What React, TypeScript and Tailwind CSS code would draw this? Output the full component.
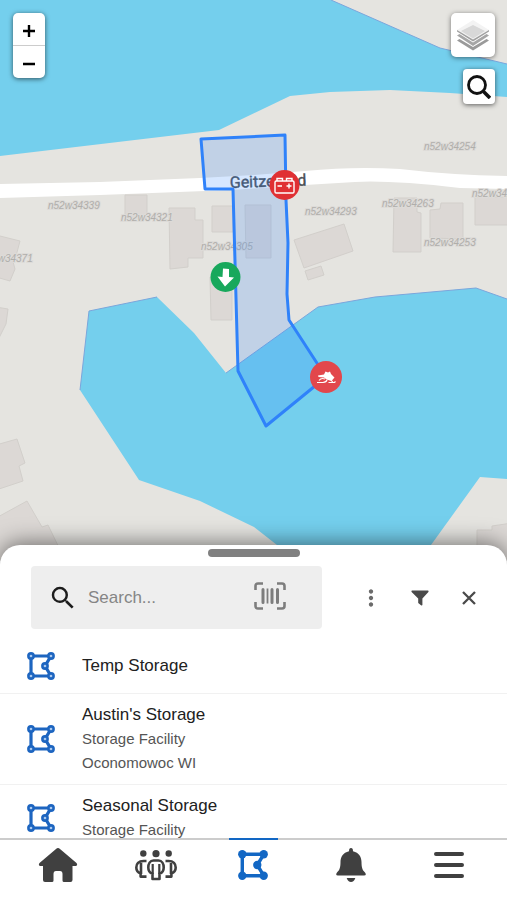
import { useState } from "react";
import { MdMoreVert, MdSearch } from "react-icons/md";

const WATER = "#74cfed";
const SHORE = "#7ba6dc";

const facilities = [
  { name: "Temp Storage", details: [] },
  { name: "Austin's Storage", details: ["Storage Facility", "Oconomowoc WI"] },
  { name: "Seasonal Storage", details: ["Storage Facility"] },
];

const houseLabels = [
  { text: "n52w34254", x: 424, y: 150 },
  { text: "n52w34339", x: 48, y: 209 },
  { text: "n52w34321", x: 121, y: 221 },
  { text: "n52w34305", x: 201, y: 250 },
  { text: "n52w34371", x: -19, y: 262 },
  { text: "n52w34293", x: 305, y: 215 },
  { text: "n52w34263", x: 382, y: 207 },
  { text: "n52w34253", x: 424, y: 246 },
  { text: "n52w34243", x: 472, y: 197 },
];

const buildings = [
  "-4,235 20,241 16,256 12,258 15,269 10,281 -4,277",
  "-4,307 8,309 6,324 -4,344",
  "125,195 147,195 147,218 125,218",
  "169,208 195,208 195,220 203,220 203,258 188,258 188,267 170,269",
  "212,206 233,206 233,232 212,232",
  "210,277 232,277 232,320 211,320",
  "245,205 271,205 271,258 246,258",
  "294,240 344,224 353,251 304,268",
  "305,271 321,266 324,275 308,280",
  "394,198 417,198 417,212 421,213 421,252 393,252",
  "430,210 440,209 441,203 463,203 463,239 430,238",
  "475,197 512,197 512,225 475,225",
  "-4,445 17,439 25,463 19,466 23,481 -4,490",
  "-4,518 27,501 42,527 48,525 66,562 -4,562",
  "477,530 492,530 492,526 512,523 512,562 477,562",
];

function PolygonIcon({ className, solid }: { className?: string; solid?: boolean }) {
  const points = [[4, 4], [24, 4], [18, 14], [24, 24], [4, 24]];
  return (
    <svg viewBox="0 0 28 28" className={className} aria-hidden="true">
      <path d="M4 4H24L18 14L24 24H4Z" fill="none" stroke="currentColor" strokeWidth="3.200" />
      {points.map(([x, y]) => (
        <g key={`${x}-${y}`}>
          <circle cx={x} cy={y} r="3.900" fill="currentColor" />
          {!solid && <circle cx={x} cy={y} r="1.300" fill="#a9c8ee" />}
        </g>
      ))}
    </svg>
  );
}

function BarcodeIcon() {
  return (
    <svg viewBox="0 0 32 28" className="h-7 w-8" fill="none" stroke="currentColor" aria-hidden="true">
      <path
        d="M9 1.500H4Q1.500 1.500 1.500 4V8M23 1.500h5q2.500 0 2.500 2.500V8M9 26.500H4Q1.500 26.500 1.500 24V20M23 26.500h5q2.500 0 2.500-2.500V20"
        strokeWidth="2.600"
      />
      <path d="M9 7.500V20.500M18 7.500V20.500M23.500 7.500V20.500" strokeWidth="3" strokeLinecap="round" />
      <path d="M13.500 6.500V21.500" strokeWidth="1.800" />
    </svg>
  );
}

function FilterIcon() {
  return (
    <svg viewBox="0 0 18 16" className="h-4 w-[18px]" fill="currentColor" aria-hidden="true">
      <path d="M1 .5H17Q18 .8 17.400 1.900L11.400 8.400V15Q11 15.800 10 15.200L7.200 13V8.400L.6 1.900Q0 .8 1 .5Z" />
    </svg>
  );
}

function CloseIcon() {
  return (
    <svg viewBox="0 0 14 14" className="size-3.5" stroke="currentColor" strokeWidth="2.300" aria-hidden="true">
      <path d="M1 1 13 13M13 1 1 13" />
    </svg>
  );
}

function LayersIcon() {
  return (
    <svg viewBox="0 0 32 32" className="size-8" aria-hidden="true">
      <path d="M0 21.500 2.500 20 16 28 29.500 20 32 21.500 16 31.500Z" fill="#9a9a9a" />
      <path d="M0 16.500 2.500 15 16 23.500 29.500 15 32 16.500 16 27Z" fill="#a6a6a6" />
      <path d="M0 11 16 1 32 11 16 21Z" fill="#f3f3f3" />
      <path d="M4 12 16 6 28 12 16 19.500Z" fill="#d8d8d8" />
      <path d="M0 11 16 20.500 32 11V12.500L16 22.500 0 12.500Z" fill="#a0a0a0" />
    </svg>
  );
}

function HomeIcon() {
  return (
    <svg viewBox="0 0 40 34" className="h-[34px] w-10" fill="currentColor" aria-hidden="true">
      <path d="M20 0Q21 0 22 1L38.500 15Q40 17 38 18H34.500V32Q34.500 34 32.500 34H26Q24.500 34 24.500 32.500V26Q24.500 23 22 23H18Q15.500 23 15.500 26V32.500Q15.500 34 14 34H7Q5 34 5 32V18H2Q0 17 1.500 15L18 1Q19 0 20 0Z" />
    </svg>
  );
}

function PeopleIcon() {
  return (
    <svg viewBox="0 0 44 32" className="h-8 w-11" fill="none" stroke="currentColor" aria-hidden="true">
      <g fill="currentColor" stroke="none">
        <circle cx="9.300" cy="4.500" r="3.200" />
        <circle cx="22" cy="4.700" r="3.600" />
        <circle cx="34.700" cy="4.500" r="3.200" />
      </g>
      <g strokeWidth="2.600" strokeLinejoin="round">
        <path d="M12.500 12H9.500C4.500 12 2.300 15 2.300 18.500C2.300 21 4 23.500 6.600 24.500V27.600H12.500M7 14V25" />
        <path d="M31.500 12H34.500C39.500 12 41.700 15 41.700 18.500C41.700 21 40 23.500 37.400 24.500V27.600H31.500M37 14V25" />
        <path d="M19.500 11.500H24.500C28 11.500 29.700 15 29.700 18.500C29.700 22 28 24 25.500 24.500V30H18.500V24.500C16 24 14.300 22 14.300 18.500C14.300 15 16 11.500 19.500 11.500Z" />
        <path d="M18.700 15V25M25.300 15V25" strokeWidth="2.200" />
      </g>
    </svg>
  );
}

function BellIcon() {
  return (
    <svg viewBox="0 0 30 34" className="h-[34px] w-[30px]" fill="currentColor" aria-hidden="true">
      <path d="M15 0Q17 0 17 3.200C23 4.500 25.500 9 25.500 14C25.500 20 26.500 22 29 24.500Q31 27.500 28 27.500H2Q-1 27.500 1 24.500C3.500 22 4.500 20 4.500 14C4.500 9 7 4.500 13 3.200Q13 0 15 0Z" />
      <path d="M10.700 30H19.300Q18 34 15 34T10.700 30Z" />
    </svg>
  );
}

function MenuIcon() {
  return (
    <svg viewBox="0 0 30 26" className="h-[26px] w-[30px]" stroke="currentColor" strokeWidth="4" strokeLinecap="round" aria-hidden="true">
      <path d="M2 2H28M2 13H28M2 24H28" />
    </svg>
  );
}

function MapCanvas() {
  return (
    <svg
      viewBox="0 0 507 562"
      preserveAspectRatio="xMidYMin slice"
      className="h-full w-full"
      role="img"
      aria-label="Property map"
    >
      <rect width="507" height="562" fill="#e5e4e0" />

      <path d="M0 0H331L440 48 507 64V97L450 93 390 90 330 92 290 96 219 130 0 156Z" fill={WATER} />
      <path
        d="M89 311 157 297 194 333 226 373 318 307 375 297 476 288 507 299V479L480 477 431 545 418 562H298L277 545 254 527 200 501 139 480 80 390Z"
        fill={WATER}
      />
      <path
        d="M331 0 440 48 507 64M80 390 89 311 157 297M226 373 318 307 375 297 476 288 507 299"
        fill="none"
        stroke={SHORE}
      />

      <path
        d="M0 184 100 182 200 178 254 175 305 171Q355 166 400 169 450 175 507 176V189L460 188Q390 180 355 182L305 185 232 190 205 191 100 195 0 198Z"
        fill="#fff"
      />

      <g fill="#dcd8d5" stroke="#d2cfcb">
        {buildings.map((points) => (
          <polygon key={points} points={points} />
        ))}
      </g>

      <g
        fontSize="10"
        fontStyle="italic"
        fill="#b0aeab"
        stroke="#dddbd8"
        strokeWidth="2"
        paintOrder="stroke"
        className="font-['Liberation_Sans',sans-serif]"
      >
        {houseLabels.map((label) => (
          <text key={label.text} x={label.x} y={label.y}>
            {label.text}
          </text>
        ))}
      </g>

      <text
        x="230"
        y="188"
        transform="rotate(-2 230 188)"
        fontSize="16"
        fill="#4c5056"
        stroke="#4c5056"
        strokeWidth="0.400"
        className="font-[Roboto,sans-serif]"
      >
        Geitzen Rd
      </text>

      <path
        d="M201 139 285 135 286 200 288 243 287 294 289 320 326 377 266 426 238 371 233 189 205 189Z"
        fill="#3388ff"
        fillOpacity="0.2"
        stroke="#2f82fa"
        strokeWidth="3"
        strokeLinejoin="round"
      />

      {/* battery */}
      <g>
        <circle cx="284.500" cy="185" r="15" fill="#e03033" />
        <g fill="none" stroke="#fff" strokeWidth="1.400">
          <rect x="275" y="181" width="19" height="12" rx="1.200" />
          <path d="M277 181V178.500H282.500V181M286.500 181V178.500H292V181M277.500 186H282M286.500 186H291.500M289 183.500V188.500" />
        </g>
      </g>

      {/* entry point */}
      <g>
        <circle cx="225.500" cy="277" r="15" fill="#18a85c" />
        <path d="M223 268.500 229 269V277L234 277.500 225 286.500 217.500 276.500 222.500 277Z" fill="#fff" />
      </g>

      {/* snowmobile */}
      <g>
        <circle cx="326" cy="377" r="16" fill="#e2474c" />
        <path d="M318 375.500 324 374.500 325.500 371.500 328 372.500 330 371.500 331 374 334.500 377.500 331.500 381 326.500 379.500 324 377.500 318.500 377Z" fill="#fff" />
        <path
          d="M317 382.500H323Q326.500 382 327 380M319 380.500Q321 377.500 325 379M328.500 382.500H334.500L335.500 381.500M331 380 333 382.500"
          fill="none"
          stroke="#fff"
          strokeWidth="1.200"
        />
      </g>
    </svg>
  );
}

function MapView() {
  return (
    <section className="relative h-[67%] w-full shrink-0 overflow-hidden">
      <MapCanvas />

      <div className="absolute left-[13px] top-[13px] flex w-8 flex-col divide-y divide-[#ccc] overflow-hidden rounded-[5px] bg-white shadow-[0_1px_5px_rgba(0,0,0,0.6)]">
        <button type="button" aria-label="Zoom in" className="flex h-[33px] items-center justify-center pb-px pt-1">
          <svg viewBox="0 0 14 14" className="size-3.5" stroke="#000" strokeWidth="2.400" aria-hidden="true">
            <path d="M1 7H13M7 1V13" />
          </svg>
        </button>
        <button type="button" aria-label="Zoom out" className="flex h-8 items-center justify-center pt-1">
          <svg viewBox="0 0 14 14" className="size-3.5" stroke="#000" strokeWidth="2.400" aria-hidden="true">
            <path d="M1 7H13" />
          </svg>
        </button>
      </div>

      <div className="absolute right-3 top-[13px] flex flex-col items-end gap-3">
        <button
          type="button"
          aria-label="Layers"
          className="flex size-11 items-center justify-center rounded-[5px] bg-white shadow-[0_1px_5px_rgba(0,0,0,0.5)]"
        >
          <LayersIcon />
        </button>
        <button
          type="button"
          aria-label="Search map"
          className="flex h-[35px] w-8 items-center justify-center rounded bg-white shadow-[0_1px_5px_rgba(0,0,0,0.6)]"
        >
          <svg viewBox="0 0 24 24" className="size-6" fill="none" stroke="#111" aria-hidden="true">
            <circle cx="10" cy="10" r="8.500" strokeWidth="2.800" />
            <path d="M16.500 16.500 23 23" strokeWidth="3.600" />
          </svg>
        </button>
      </div>
    </section>
  );
}

function SearchBar() {
  const [query, setQuery] = useState("");

  return (
    <div className="flex items-center gap-6 pl-[31px] pr-3.5">
      <div className="flex h-[63px] min-w-0 flex-1 items-center rounded-sm bg-[#eee] pl-[17px] pr-9">
        <MdSearch className="size-[30px] shrink-0 text-[#1c1c1c]" aria-hidden="true" />
        <input
          type="text"
          aria-label="Search"
          placeholder="Search..."
          value={query}
          onChange={(e) => setQuery(e.target.value)}
          className="ml-2.5 min-w-0 flex-1 bg-transparent text-[17px] leading-6 outline-none placeholder:text-[#858585]"
        />
        <button type="button" aria-label="Scan barcode" className="mb-1 shrink-0 text-[#7d7d7d]">
          <BarcodeIcon />
        </button>
      </div>
      <div className="flex text-[#4a4a4a]">
        <button type="button" aria-label="More options" className="flex h-12 w-[49px] items-center justify-center text-[#6b6b6b]">
          <MdMoreVert className="size-[26px]" />
        </button>
        <button type="button" aria-label="Filter" className="flex h-12 w-[49px] items-center justify-center">
          <FilterIcon />
        </button>
        <button type="button" aria-label="Close" className="flex h-12 w-[49px] items-center justify-center">
          <CloseIcon />
        </button>
      </div>
    </div>
  );
}

function FacilityList() {
  return (
    <ul className="mt-2.5 divide-y divide-[#f1f1f1]">
      {facilities.map((facility) => (
        <li key={facility.name}>
          <a href="#" className="flex min-h-[54px] items-center gap-[27px] px-[27px] py-[9px]">
            <PolygonIcon className="size-7 shrink-0 text-[#1d65c0]" />
            <div className="text-[15px] leading-6 text-[#555]">
              <h2 className="text-[17px] leading-6 text-[#212121]">{facility.name}</h2>
              {facility.details.map((line) => (
                <p key={line}>{line}</p>
              ))}
            </div>
          </a>
        </li>
      ))}
    </ul>
  );
}

function BottomNav() {
  const items = [
    { label: "Home", icon: <HomeIcon /> },
    { label: "People", icon: <PeopleIcon /> },
    { label: "Places", icon: <PolygonIcon solid className="size-[30px]" />, active: true },
    { label: "Notifications", icon: <BellIcon /> },
    { label: "Menu", icon: <MenuIcon /> },
  ];

  return (
    <nav className="relative z-20 flex h-[62px] shrink-0 border-t-2 border-[#ccc] bg-white px-[9px]">
      {items.map((item) => (
        <a
          key={item.label}
          href="#"
          aria-label={item.label}
          aria-current={item.active ? "page" : undefined}
          className={`relative flex h-[50px] flex-1 items-center justify-center ${
            item.active ? "text-[#1267c4]" : "text-[#404040]"
          }`}
        >
          {item.active && <span className="absolute -top-0.5 h-0.5 w-[49px] bg-[#1267c4]" />}
          {item.icon}
        </a>
      ))}
    </nav>
  );
}

export default function App() {
  return (
    <div className="flex h-screen flex-col overflow-hidden bg-white font-['Liberation_Sans',Arial,sans-serif]">
      <main className="flex min-h-0 flex-1 flex-col">
        <MapView />
        <section className="relative z-10 -mt-4 min-h-0 flex-1 rounded-t-[20px] bg-white shadow-[0_-2px_22px_rgba(0,0,0,0.5)]">
          <div className="h-full overflow-hidden">
            <button type="button" aria-label="Resize panel" className="mx-auto block pb-[9px] pt-1">
              <span className="block h-2 w-[92px] rounded-full bg-[#808080]" />
            </button>
            <SearchBar />
            <FacilityList />
          </div>
        </section>
      </main>
      <BottomNav />
    </div>
  );
}
